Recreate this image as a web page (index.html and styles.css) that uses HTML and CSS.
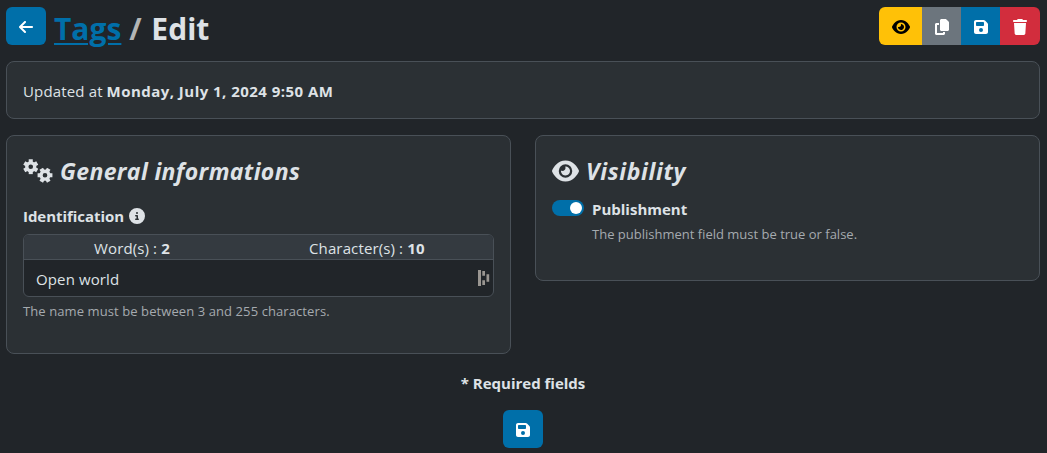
FILE: index.html
```html
<!DOCTYPE html>
<html lang="en">
<head>
<meta charset="utf-8">
<title>Tags / Edit</title>
<link rel="stylesheet" href="styles.css">
</head>
<body>
<svg class="defs" width="0" height="0">
  <symbol id="eye" viewBox="0 0 576 512"><path d="M288 32c-80.8 0-145.5 36.8-192.6 80.6C48.6 156 17.3 208 2.5 243.7c-3.3 7.9-3.3 16.7 0 24.6C17.3 304 48.6 356 95.4 399.4C142.5 443.2 207.2 480 288 480s145.5-36.8 192.6-80.6c46.8-43.5 78.1-95.4 93-131.1c3.3-7.9 3.3-16.7 0-24.6c-14.9-35.7-46.2-87.7-93-131.1C433.5 68.8 368.8 32 288 32zM144 256a144 144 0 1 1 288 0 144 144 0 1 1 -288 0zm144-64c0 35.3-28.7 64-64 64c-7.1 0-13.9-1.2-20.3-3.3c-5.5-1.8-11.9 1.6-11.7 7.4c.3 6.9 1.3 13.8 3.2 20.7c13.7 51.2 66.4 81.6 117.6 67.9s81.6-66.4 67.9-117.6c-11.1-41.5-47.8-69.4-88.6-71.1c-5.8-.2-9.2 6.1-7.4 11.7c2.1 6.4 3.3 13.2 3.3 20.3z"/></symbol>
  <symbol id="floppy" viewBox="0 0 448 512"><path d="M64 32C28.7 32 0 60.7 0 96V416c0 35.3 28.7 64 64 64H384c35.3 0 64-28.7 64-64V173.3c0-17-6.7-33.3-18.7-45.3L352 50.7C340 38.7 323.7 32 306.7 32H64zm0 96c0-17.7 14.3-32 32-32H288c17.7 0 32 14.3 32 32v64c0 17.7-14.3 32-32 32H96c-17.7 0-32-14.3-32-32V128zM224 288a64 64 0 1 1 0 128 64 64 0 1 1 0-128z"/></symbol>
  <symbol id="gear" viewBox="-8 -8 16 16"><g fill="none" stroke="currentColor"><circle r="4.1" stroke-width="3.4"/><path stroke-width="4.2" d="M0-4.6V-7.8M0 4.6V7.8M4-2.3 6.7-3.87M-4 2.3-6.7 3.87M4 2.3 6.7 3.87M-4-2.3-6.7-3.87"/></g></symbol>
</svg>
<header class="top">
  <a class="btn btn-primary"><svg width="14" height="16" viewBox="0 0 448 512"><path d="M9.4 233.4c-12.5 12.5-12.5 32.8 0 45.3l160 160c12.5 12.5 32.8 12.5 45.3 0s12.5-32.8 0-45.3L109.2 288 416 288c17.7 0 32-14.3 32-32s-14.3-32-32-32l-306.7 0L214.6 118.6c12.5-12.5 12.5-32.8 0-45.3s-32.8-12.5-45.3 0l-160 160z"/></svg></a>
  <h1 class="title"><span class="link">Tags</span> <span class="slash">/</span> Edit</h1>
  <div class="group">
    <a class="btn btn-warning"><svg width="18" height="16"><use href="#eye"/></svg></a>
    <a class="btn btn-secondary"><svg width="14" height="16" viewBox="0 0 448 512"><path d="M208 0H332.1c12.7 0 24.9 5.1 33.9 14.1l67.9 67.9c9 9 14.1 21.2 14.1 33.9V336c0 26.5-21.5 48-48 48H208c-26.5 0-48-21.5-48-48V48c0-26.5 21.5-48 48-48zM48 128h80v64H64V448H256V416h64v48c0 26.5-21.5 48-48 48H48c-26.5 0-48-21.5-48-48V176c0-26.5 21.5-48 48-48z"/></svg></a>
    <a class="btn btn-primary"><svg width="14" height="16"><use href="#floppy"/></svg></a>
    <a class="btn btn-danger"><svg width="14" height="16" viewBox="0 0 448 512"><path d="M135.2 17.7L128 32H32C14.3 32 0 46.3 0 64S14.3 96 32 96H416c17.7 0 32-14.3 32-32s-14.3-32-32-32H320l-7.2-14.3C307.4 6.8 296.3 0 284.2 0H163.8c-12.1 0-23.2 6.8-28.6 17.7zM416 128H32L53.2 467c1.6 25.3 22.6 45 47.9 45H346.9c25.3 0 46.3-19.7 47.9-45L416 128z"/></svg></a>
  </div>
</header>
<section class="card updated"><p><span class="updated-label">Updated at</span> <b class="date">Monday, July 1, 2024 9:50 AM</b></p></section>
<main class="columns">
  <section class="card general">
    <h2 class="heading"><svg class="gears" width="30" height="24"><use href="#gear" x="0" y="0" width="15.5" height="15.5"/><use href="#gear" transform="translate(22 16.2) rotate(90)" x="-7.75" y="-7.75" width="15.5" height="15.5"/></svg><span class="general-title">General informations</span></h2>
    <label class="label"><span class="ident">Identification</span><svg width="16" height="16" viewBox="0 0 512 512"><path d="M256 512A256 256 0 1 0 256 0a256 256 0 1 0 0 512zM216 336h24V272H216c-13.3 0-24-10.7-24-24s10.7-24 24-24h48c13.3 0 24 10.7 24 24v88h8c13.3 0 24 10.7 24 24s-10.7 24-24 24H216c-13.3 0-24-10.7-24-24s10.7-24 24-24zm40-208a32 32 0 1 1 0 64 32 32 0 1 1 0-64z"/></svg></label>
    <div class="field">
      <div class="counts"><span class="words">Word(s) : <b>2</b></span><span class="chars">Character(s) : <b>10</b></span></div>
      <div class="input"><span class="value">Open world</span><svg class="handle" width="12" height="16"><path d="M0 0h3v16H0zM4.3 1h2.7v4.8H4.3zM4.3 10.2h2.7V15H4.3zM8.5 4.3h2.7v7.4H8.5z"/></svg></div>
    </div>
    <p class="help name-help">The name must be between 3 and 255 characters.</p>
  </section>
  <section class="card visibility">
    <h2 class="heading"><svg width="27" height="24"><use href="#eye"/></svg><span class="vis-title">Visibility</span></h2>
    <div class="switch-row"><span class="switch"></span><div><b class="publish">Publishment</b><p class="help pub-help">The publishment field must be true or false.</p></div></div>
  </section>
</main>
<footer class="foot">
  <b class="required">* Required fields</b>
  <a class="btn btn-primary"><svg width="14" height="16"><use href="#floppy"/></svg></a>
</footer>
</body>
</html>
```
FILE: styles.css
```css
* { box-sizing: border-box; }
body {
  margin: 0;
  padding: 7px 7px 0 6px;
  height: 453px;
  overflow: hidden;
  background: #212529;
  color: #dee2e6;
  font: 15px/24px "Open Sans", "Noto Sans", sans-serif;
}
h1, h2, p { margin: 0; }
svg { display: block; fill: currentColor; flex: none; }
.defs { position: absolute; }
b { font-weight: 700; }
.top { display: flex; height: 38px; }
.btn { display: flex; align-items: center; justify-content: center; width: 40px; height: 38px; border-radius: 6px; color: #fff; }
.btn svg { margin-top: 2px; }
.btn-primary { background: #006fa9; }
.btn-warning { background: #ffc107; color: #000; }
.btn-secondary { background: #6c757d; }
.btn-danger { background: #d22d3d; }
.title { margin-left: 8px; font-size: 30px; line-height: 43px; white-space: nowrap; }
.link { color: #006fa9; text-decoration: underline; text-decoration-thickness: 2px; text-underline-offset: 3px; text-decoration-skip-ink: auto; }
.slash { margin-right: 2px; color: #b3b5b5; }
.group { display: flex; margin-left: auto; border-radius: 6px; overflow: hidden; }
.group .btn { width: 39px; border-radius: 0; }
.group .btn-warning { width: 43px; }
.group .btn-danger { width: 40px; }
.card { background: #2b3034; border: 1px solid #495057; border-radius: 8px; padding: 16px; white-space: nowrap; }
.updated { margin-top: 16px; height: 58px; padding-top: 17px; }
.updated-label { letter-spacing: .15px; }
.date { letter-spacing: .47px; }
.columns { display: grid; grid-template-columns: 505px 505px; gap: 24px; align-items: start; margin-top: 16px; }
.general { height: 219px; }
.visibility { height: 146px; }
.heading { display: flex; align-items: center; height: 38px; font-size: 23px; font-style: italic; line-height: 38px; }
.heading svg { margin-right: 7px; }
.general-title { letter-spacing: .36px; }
.vis-title { letter-spacing: .65px; }
.label { display: flex; align-items: center; gap: 5px; height: 24px; margin-top: 14px; font-weight: 700; }
.ident { letter-spacing: -.05px; }
.field { width: 471px; height: 63px; margin-top: 6px; border: 1px solid #495057; border-radius: 6px; overflow: hidden; background: #212529; }
.counts { display: flex; height: 25px; border-bottom: 1px solid #495057; background: #343a40; line-height: 27px; letter-spacing: .13px; }
.words { padding-left: 70px; width: 285px; }
.input { display: flex; align-items: center; justify-content: space-between; height: 36px; padding: 0 3px 0 12px; }
.value { padding-top: 2px; letter-spacing: .12px; }
.handle { color: #9a9691; }
.help { font-size: 13px; line-height: 20px; color: #a5aaaf; }
.name-help { margin-top: 4px; letter-spacing: .09px; }
.switch-row { display: flex; gap: 8px; margin-top: 7px; }
.switch { display: flex; justify-content: flex-end; align-items: center; width: 32px; height: 16px; margin-top: 3px; padding-right: 2px; border-radius: 8px; background: #006fa9; }
.switch::after { content: ""; width: 12px; height: 12px; border-radius: 50%; background: #fff; }
.publish { display: block; }
.pub-help { margin-top: 3px; }
.foot { display: flex; flex-direction: column; align-items: center; gap: 15px; margin-top: 17px; white-space: nowrap; }
```
